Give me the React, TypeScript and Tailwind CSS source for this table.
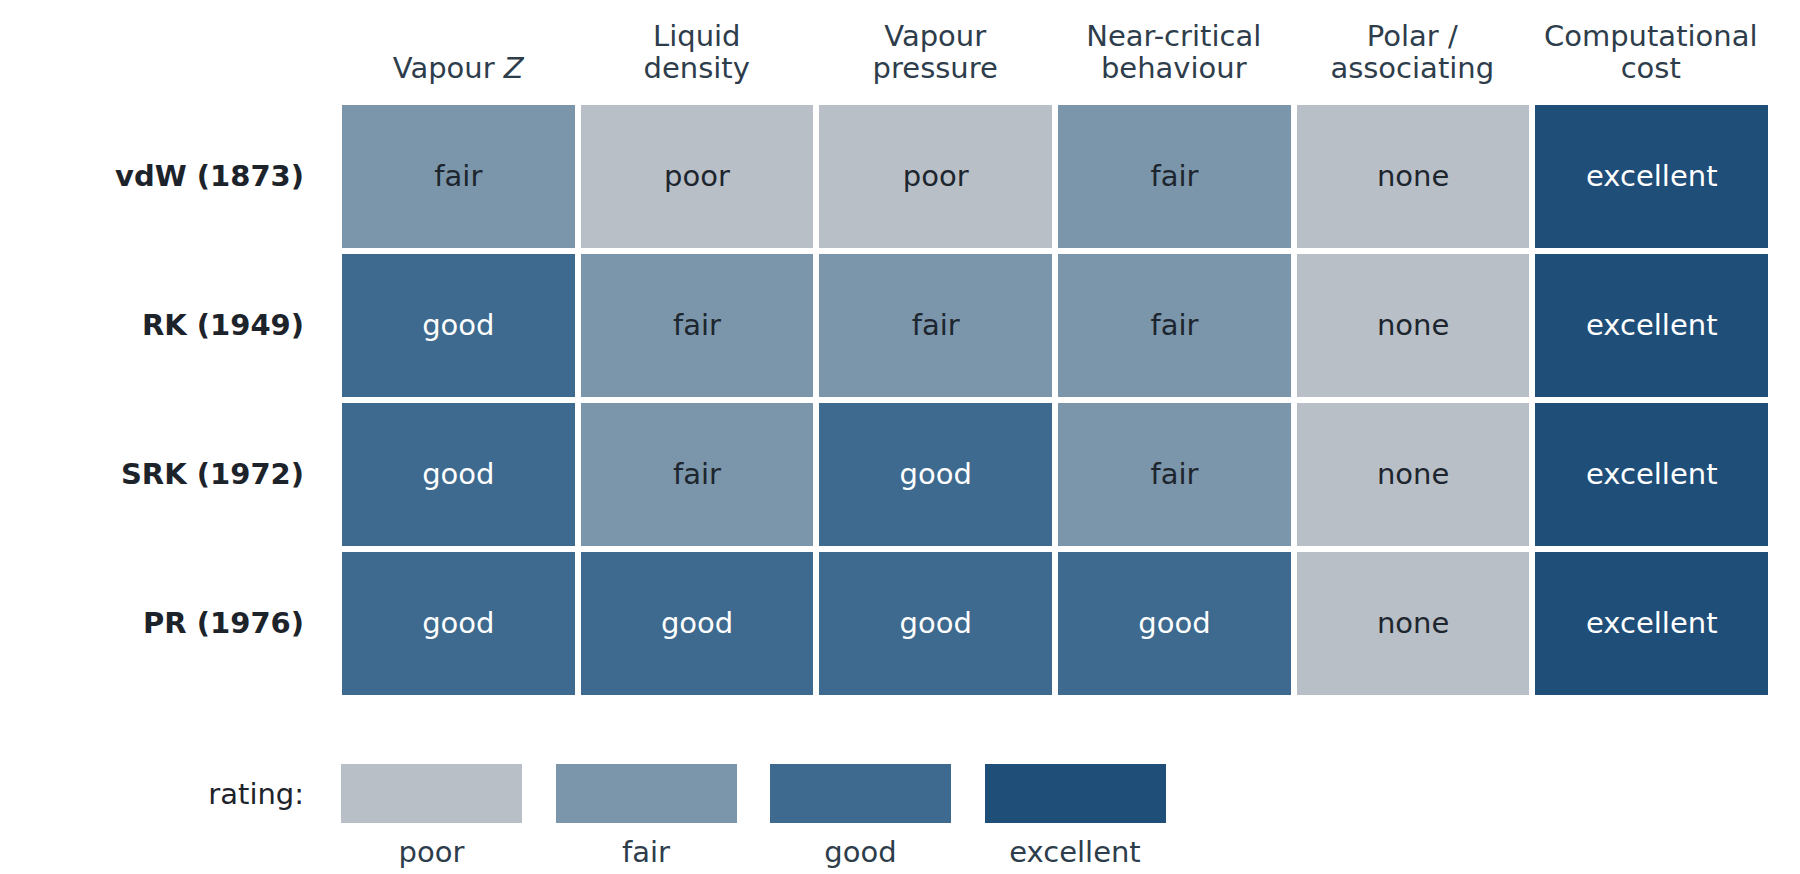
type Rating = 'poor' | 'fair' | 'good' | 'excellent' | 'none';

const CELL_CLASSES: Record<Rating, string> = {
  none: 'bg-[#b8bfc6] text-[#1d252e]',
  poor: 'bg-[#b8bfc6] text-[#1d252e]',
  fair: 'bg-[#7b96aa] text-[#1d252e]',
  good: 'bg-[#3d6a8e] text-white',
  excellent: 'bg-[#1f4e79] text-white',
};

const SWATCH_CLASSES: Record<Rating, string> = {
  none: 'bg-[#b8bfc6]',
  poor: 'bg-[#b8bfc6]',
  fair: 'bg-[#7b96aa]',
  good: 'bg-[#3d6a8e]',
  excellent: 'bg-[#1f4e79]',
};

const COLUMNS: string[][] = [
  ['Vapour Z'],
  ['Liquid', 'density'],
  ['Vapour', 'pressure'],
  ['Near-critical', 'behaviour'],
  ['Polar /', 'associating'],
  ['Computational', 'cost'],
];

const ROWS: { name: string; values: Rating[] }[] = [
  { name: 'vdW (1873)', values: ['fair', 'poor', 'poor', 'fair', 'none', 'excellent'] },
  { name: 'RK (1949)', values: ['good', 'fair', 'fair', 'fair', 'none', 'excellent'] },
  { name: 'SRK (1972)', values: ['good', 'fair', 'good', 'fair', 'none', 'excellent'] },
  { name: 'PR (1976)', values: ['good', 'good', 'good', 'good', 'none', 'excellent'] },
];

const LEGEND: Rating[] = ['poor', 'fair', 'good', 'excellent'];

function Header({ lines }: { lines: string[] }) {
  return (
    <div className="w-[232.5px] flex flex-col items-center justify-end leading-[32px] text-[#2e3d4b]">
      {lines.map((line) =>
        line === 'Vapour Z' ? (
          <span key={line}>
            Vapour <i>Z</i>
          </span>
        ) : (
          <span key={line}>{line}</span>
        )
      )}
    </div>
  );
}

export default function App() {
  return (
    <div
      className="w-[1800px] h-[874px] bg-white text-[29px] leading-[34px]"
      style={{ fontFamily: '"DejaVu Sans", Verdana, sans-serif' }}
    >
      <div className="flex gap-[6px] pl-[342px] h-[84px] mb-[21px]">
        {COLUMNS.map((lines) => (
          <Header key={lines.join(' ')} lines={lines} />
        ))}
      </div>

      <div className="flex flex-col gap-[6px]">
        {ROWS.map((row) => (
          <div key={row.name} className="flex items-center h-[143px]">
            <div className="w-[304px] pb-[2px] text-right font-bold text-[#1d232a]">{row.name}</div>
            <div className="flex gap-[6px] ml-[38px] h-full">
              {row.values.map((value, i) => (
                <div
                  key={i}
                  className={`w-[232.7px] h-full pb-[2px] flex items-center justify-center ${CELL_CLASSES[value]}`}
                >
                  {value}
                </div>
              ))}
            </div>
          </div>
        ))}
      </div>

      <div className="flex mt-[69px]">
        <div className="w-[304px] h-[59px] flex items-center justify-end text-[#1d232a]">rating:</div>
        <div className="flex gap-[33.5px] ml-[37px]">
          {LEGEND.map((value) => (
            <div key={value} className="w-[181px] flex flex-col items-center gap-[12px]">
              <div className={`w-full h-[59px] ${SWATCH_CLASSES[value]}`} />
              <span className="text-[#2e3d4b]">{value}</span>
            </div>
          ))}
        </div>
      </div>
    </div>
  );
}
